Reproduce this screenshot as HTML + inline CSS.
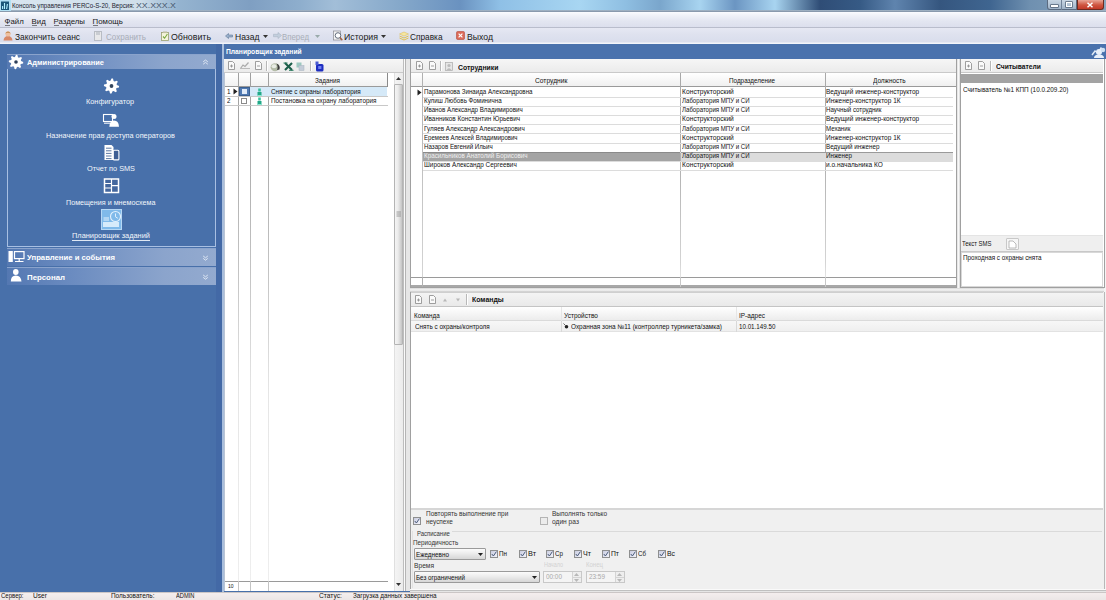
<!DOCTYPE html><html><head><meta charset="utf-8"><style>
*{margin:0;padding:0;box-sizing:border-box}
html,body{width:1106px;height:600px;overflow:hidden;background:#f0f0f0;font-family:"Liberation Sans",sans-serif;color:#222}
.a{position:absolute}
.t{position:absolute;white-space:nowrap;line-height:1}
</style></head><body>
<div class="a" style="left:0px;top:0px;width:1106px;height:11px;background:linear-gradient(90deg,#d9e6f0 0px,#cfdeea 140px,#95b4d0 178px,#7f9fc2 250px,#8eaecd 300px,#a2bed8 335px,#85a8ca 400px,#6a92c0 460px,#8fc0e6 500px,#a8d6f2 580px,#8fbfe2 625px,#7aa6cc 660px,#a8d4f0 700px,#6b95c2 735px,#a8d4f0 775px,#2f4d76 820px,#365a85 860px,#5f84ae 895px,#35567f 940px,#3f6590 990px,#6f90b0 1030px,#8aa6c0 1106px)"></div>
<div class="a" style="left:0px;top:10px;width:1106px;height:2px;background:linear-gradient(#a9bccc,#7f8fa3)"></div>
<svg class="a" style="left:0px;top:0px;" width="11" height="11" viewBox="0 0 11 11"><rect x="0" y="0" width="11" height="11" fill="#b2e0f2"/><rect x="1" y="1.5" width="8" height="8.5" fill="#1c5878"/><path d="M2.6 6 V9 M4.5 3 V9 M7.4 4 L6.6 9" stroke="#b4f2ff" stroke-width="1.1"/></svg>
<div class="t" style="left:11.60px;top:2.20px;font-size:7.21px;color:#1c2430;transform:scaleX(0.8550);transform-origin:0 0;">Консоль управления PERCo-S-20, Версия: </div>
<div class="t" style="left:135.60px;top:2.20px;font-size:7.21px;color:#44546a;transform:scaleX(1.2176);transform-origin:0 0;">XX.XXX.X</div>
<div class="a" style="left:1047px;top:0px;width:30px;height:10px;background:linear-gradient(#c9d6e3,#9fb3c8);border:1px solid #5b6b80;border-top:none;border-radius:0 0 0 3px"></div>
<div class="a" style="left:1061px;top:0px;width:1px;height:10px;background:#6f8197"></div>
<div class="a" style="left:1051px;top:5px;width:7px;height:2px;background:#fff;box-shadow:0 0 0 0.6px #3a4a5e"></div>
<div class="a" style="left:1066px;top:2px;width:6px;height:5px;border:1px solid #fff;box-shadow:0 0 0 0.6px #3a4a5e"></div>
<div class="a" style="left:1077px;top:0px;width:27px;height:10px;background:linear-gradient(#e9a696,#cf5540 55%,#c23a28);border:1px solid #6e2a20;border-top:none;border-radius:0 0 3px 0"></div>
<svg class="a" style="left:1086px;top:2px;" width="8" height="6" viewBox="0 0 8 6"><path d="M1.5 0.8 L6.5 5.2 M6.5 0.8 L1.5 5.2" stroke="#fff" stroke-width="1.5"/></svg>
<div class="a" style="left:0px;top:12px;width:1106px;height:16px;background:linear-gradient(#fbfcff 0px,#f1f3f9 3px,#e3e6f1 9px,#dcdfed 15px)"></div>
<div class="a" style="left:0px;top:27px;width:1106px;height:1px;background:#b9bdcc"></div>
<div class="t" style="left:4.60px;top:17.80px;font-size:7.80px;color:#1a1a1a;">Файл</div>
<div class="t" style="left:31.60px;top:17.80px;font-size:7.80px;color:#1a1a1a;">Вид</div>
<div class="t" style="left:53.60px;top:17.80px;font-size:7.80px;color:#1a1a1a;">Разделы</div>
<div class="t" style="left:92.60px;top:17.80px;font-size:7.80px;color:#1a1a1a;">Помощь</div>
<div class="a" style="left:5px;top:25px;width:5px;height:1px;background:#333;opacity:.6"></div>
<div class="a" style="left:32px;top:25px;width:5px;height:1px;background:#333;opacity:.6"></div>
<div class="a" style="left:54px;top:25px;width:5px;height:1px;background:#333;opacity:.6"></div>
<div class="a" style="left:93px;top:25px;width:5px;height:1px;background:#333;opacity:.6"></div>
<div class="a" style="left:0px;top:28px;width:1106px;height:16px;background:linear-gradient(#e6e8f3 0px,#dfe2ef 6px,#d9ddec 14px,#f2f4fa 15px)"></div>
<svg class="a" style="left:3px;top:30px;" width="10" height="11" viewBox="0 0 10 11"><path d="M0.5 10.5 Q1 6 5 6 Q9 6 9.5 10.5Z" fill="#d88868"/><circle cx="5" cy="3.8" r="2.6" fill="#f0c0a0"/><path d="M2.2 3.6 Q5 -0.8 7.8 3.6 Q5 2 2.2 3.6Z" fill="#c08850"/></svg>
<div class="t" style="left:14.60px;top:33.00px;font-size:8.50px;color:#1a1a1a;transform:scaleX(0.9908);transform-origin:0 0;">Закончить сеанс</div>
<svg class="a" style="left:94px;top:31px;" width="8" height="10" viewBox="0 0 8 10"><rect x="0.5" y="0.5" width="7" height="9" fill="#e8e8ea" stroke="#b8bcc4"/><rect x="2" y="1" width="4" height="3" fill="#c9ccd2"/></svg>
<div class="t" style="left:105.60px;top:33.00px;font-size:8.50px;color:#a8adb8;transform:scaleX(0.9470);transform-origin:0 0;">Сохранить</div>
<svg class="a" style="left:161px;top:31px;" width="9" height="10" viewBox="0 0 9 10"><rect x="0.5" y="1.5" width="7" height="8" fill="#f4f4dc" stroke="#9aa070" stroke-width="0.8"/><path d="M2 5.5 L3.6 7.2 L6.4 3" stroke="#7aa840" stroke-width="1.1" fill="none"/><rect x="2" y="0.5" width="4" height="1.6" fill="#c0c0a0"/></svg>
<div class="t" style="left:170.60px;top:33.00px;font-size:8.50px;color:#1a1a1a;transform:scaleX(1.0393);transform-origin:0 0;">Обновить</div>
<svg class="a" style="left:225px;top:33px;" width="8" height="6" viewBox="0 0 8 6"><path d="M0.5 3 L3.5 0.5 L3.5 2 L7.5 2 L7.5 4 L3.5 4 L3.5 5.5Z" fill="#9ab0cc" stroke="#5f7898" stroke-width="0.6"/></svg>
<div class="t" style="left:234.60px;top:33.00px;font-size:8.50px;color:#1a1a1a;transform:scaleX(1.0059);transform-origin:0 0;">Назад</div>
<svg class="a" style="left:263px;top:35px;" width="5" height="3" viewBox="0 0 5 3"><path d="M0 0 L5 0 L2.5 3Z" fill="#333"/></svg>
<svg class="a" style="left:273px;top:32px;" width="9" height="7" viewBox="0 0 9 7"><path d="M8.5 3.5 L5 0.5 L5 2.3 L0.5 2.3 L0.5 4.7 L5 4.7 L5 6.5Z" fill="#c3cfdd" stroke="#a9b6c6" stroke-width="0.6"/></svg>
<div class="t" style="left:281.60px;top:33.00px;font-size:8.50px;color:#a9aeb8;transform:scaleX(0.9238);transform-origin:0 0;">Вперед</div>
<svg class="a" style="left:315px;top:35px;" width="5" height="3" viewBox="0 0 5 3"><path d="M0 0 L5 0 L2.5 3Z" fill="#9aa"/></svg>
<svg class="a" style="left:333px;top:30px;" width="10" height="11" viewBox="0 0 10 11"><rect x="0.5" y="1" width="7" height="9" fill="#f2f2f2" stroke="#8a8a90" stroke-width="0.7"/><circle cx="5" cy="5.5" r="2.8" fill="#fff" stroke="#556070" stroke-width="0.9"/><path d="M7 7.5 L9.3 10.3" stroke="#a06040" stroke-width="1.4"/></svg>
<div class="t" style="left:343.60px;top:33.00px;font-size:8.50px;color:#1a1a1a;transform:scaleX(1.0315);transform-origin:0 0;">История</div>
<svg class="a" style="left:381px;top:35px;" width="5" height="3" viewBox="0 0 5 3"><path d="M0 0 L5 0 L2.5 3Z" fill="#333"/></svg>
<svg class="a" style="left:399px;top:31px;" width="10" height="10" viewBox="0 0 10 10"><path d="M0.5 3 L5 1 L9.5 3 L5 5Z" fill="#f6e6a0" stroke="#d8b850" stroke-width="0.5"/><path d="M0.5 5 L5 7 L9.5 5 M0.5 7 L5 9 L9.5 7" stroke="#e0c050" stroke-width="1" fill="none"/></svg>
<div class="t" style="left:409.60px;top:33.00px;font-size:8.50px;color:#1a1a1a;transform:scaleX(0.9747);transform-origin:0 0;">Справка</div>
<svg class="a" style="left:456px;top:31px;" width="9" height="9" viewBox="0 0 9 9"><rect x="0.5" y="0.5" width="8" height="8" rx="1.2" fill="#dc6a58" stroke="#b44a3a" stroke-width="0.6"/><path d="M2.6 2.6 L6.4 6.4 M6.4 2.6 L2.6 6.4" stroke="#fff" stroke-width="1.2"/></svg>
<div class="t" style="left:466.60px;top:33.00px;font-size:8.50px;color:#1a1a1a;transform:scaleX(1.0222);transform-origin:0 0;">Выход</div>
<div class="a" style="left:0px;top:44px;width:1106px;height:548px;background:#4870aa"></div>
<div class="a" style="left:0px;top:592px;width:1106px;height:8px;background:linear-gradient(#f4eeee,#ebe6e6);border-top:1px solid #cbc6c6"></div>
<div class="t" style="left:1.20px;top:593.15px;font-size:6.68px;color:#111;transform:scaleX(0.8997);transform-origin:0 0;">Сервер:</div>
<div class="t" style="left:33.00px;top:593.15px;font-size:6.68px;color:#111;transform:scaleX(0.9929);transform-origin:0 0;">User</div>
<div class="t" style="left:110.90px;top:593.15px;font-size:6.68px;color:#111;transform:scaleX(0.9626);transform-origin:0 0;">Пользователь:</div>
<div class="t" style="left:175.60px;top:593.15px;font-size:6.68px;color:#111;transform:scaleX(0.8597);transform-origin:0 0;">ADMIN</div>
<div class="t" style="left:318.60px;top:593.15px;font-size:6.68px;color:#111;transform:scaleX(0.9928);transform-origin:0 0;">Статус:</div>
<div class="t" style="left:353.30px;top:593.15px;font-size:6.68px;color:#111;transform:scaleX(0.9489);transform-origin:0 0;">Загрузка данных завершена</div>
<div class="a" style="left:7px;top:54px;width:209px;height:15px;background:linear-gradient(90deg,#5478b2 0%,#6a8bc0 30%,#8ba4cc 75%,#93aacf 100%);border-top:1px solid #8aa3cc"></div>
<svg class="a" style="left:8px;top:54px" width="16" height="16" viewBox="0 0 16 16"><polygon points="8.00,0.80 9.40,0.94 9.98,3.21 10.88,3.69 13.09,2.91 13.99,4.00 12.79,6.02 13.08,6.99 15.20,8.00 15.06,9.40 12.79,9.98 12.31,10.88 13.09,13.09 12.00,13.99 9.98,12.79 9.01,13.08 8.00,15.20 6.60,15.06 6.02,12.79 5.12,12.31 2.91,13.09 2.01,12.00 3.21,9.98 2.92,9.01 0.80,8.00 0.94,6.60 3.21,6.02 3.69,5.12 2.91,2.91 4.00,2.01 6.02,3.21 6.99,2.92" fill="#fff"/><circle cx="8" cy="8" r="4.46" fill="#fff"/><circle cx="8" cy="8" r="1.80" fill="#2d3f5a"/></svg>
<div class="t" style="left:26.90px;top:58.57px;font-size:7.60px;color:#ffffff;font-weight:bold;transform:scaleX(0.9783);transform-origin:0 0;">Администрирование</div>
<svg class="a" style="left:202px;top:59px;" width="7" height="6" viewBox="0 0 7 6"><path d="M1.2 2.8 L3.5 1 L5.8 2.8 M1.2 5.2 L3.5 3.4 L5.8 5.2" stroke="#e6edf7" stroke-width="0.9" fill="none"/></svg>
<div class="a" style="left:7px;top:69px;width:209px;height:178px;border:1px solid #a8bfe2;border-top:none"></div>
<svg class="a" style="left:103px;top:78px;" width="17" height="16" viewBox="0 0 17 16"><polygon points="8.50,0.40 9.98,0.55 10.59,2.94 11.54,3.45 13.87,2.63 14.82,3.78 13.56,5.91 13.87,6.93 16.10,8.00 15.95,9.48 13.56,10.09 13.05,11.04 13.87,13.37 12.72,14.32 10.59,13.06 9.57,13.37 8.50,15.60 7.02,15.45 6.41,13.06 5.46,12.55 3.13,13.37 2.18,12.22 3.44,10.09 3.13,9.07 0.90,8.00 1.05,6.52 3.44,5.91 3.95,4.96 3.13,2.63 4.28,1.68 6.41,2.94 7.43,2.63" fill="#fff"/><circle cx="8.5" cy="8" r="4.71" fill="#fff"/><circle cx="8.5" cy="8" r="1.90" fill="#33465f"/></svg>
<div class="t" style="left:86.40px;top:98.45px;font-size:7.74px;color:#f2f6fb;transform:scaleX(0.9473);transform-origin:0 0;">Конфигуратор</div>
<svg class="a" style="left:102px;top:113px;" width="18" height="14" viewBox="0 0 18 14"><rect x="1.5" y="1.5" width="9" height="7" fill="none" stroke="#fff" stroke-width="1.1"/><path d="M2 10.2 H9" stroke="#fff" stroke-width="1"/><circle cx="12" cy="3.6" r="2.5" fill="#fff"/><path d="M7.3 13.8 Q7.8 7.6 12 7.6 Q16.6 7.6 17 13.8Z" fill="#fff"/></svg>
<div class="t" style="left:46.40px;top:131.95px;font-size:7.74px;color:#f2f6fb;transform:scaleX(0.9433);transform-origin:0 0;">Назначение прав доступа операторов</div>
<svg class="a" style="left:103px;top:144px;" width="17" height="17" viewBox="0 0 17 17"><path d="M1.5 1 H8.5 L10.5 3 V16 H1.5Z" fill="#fff"/><path d="M3 4.2 H8.5 M3 6.8 H8.5 M3 9.4 H8.5 M3 12 H8.5 M3 14.6 H8.5" stroke="#4a6a9a" stroke-width="0.9"/><rect x="10.3" y="6.3" width="5.6" height="9.6" rx="1" fill="#3f5f94" stroke="#fff" stroke-width="1.1"/></svg>
<div class="t" style="left:86.90px;top:165.35px;font-size:7.74px;color:#f2f6fb;transform:scaleX(0.9459);transform-origin:0 0;">Отчет по SMS</div>
<svg class="a" style="left:103px;top:178px;" width="17" height="16" viewBox="0 0 17 16"><rect x="1.5" y="1" width="14" height="13.5" fill="#44679e" stroke="#fff" stroke-width="1.5"/><path d="M8.5 1 V14.5 M1.5 5.5 H8.5 M1.5 10 H8.5 M8.5 7.7 H15.5" stroke="#fff" stroke-width="1.2"/></svg>
<div class="t" style="left:65.90px;top:198.55px;font-size:7.74px;color:#f2f6fb;transform:scaleX(0.9267);transform-origin:0 0;">Помещения и мнемосхема</div>
<div class="a" style="left:101px;top:209px;width:21px;height:21px;background:#80baea;border:1px solid #b6d8f5"></div>
<svg class="a" style="left:102px;top:210px;" width="19" height="19" viewBox="0 0 19 19"><rect x="1" y="12" width="16" height="5" fill="#d6ebfb"/><path d="M1.5 8 H7 M1.5 10 H7" stroke="#e6f3fd" stroke-width="1"/><circle cx="13.5" cy="6.5" r="5" fill="#80baea" stroke="#e2f1fd" stroke-width="1.1"/><path d="M13.5 3.5 V6.8 L15.8 8.3" stroke="#e2f1fd" stroke-width="1" fill="none"/></svg>
<div class="t" style="left:72.00px;top:232.35px;font-size:7.74px;color:#f2f6fb;transform:scaleX(0.9570);transform-origin:0 0;">Планировщик заданий</div>
<div class="a" style="left:72px;top:240px;width:78px;height:1px;background:#dfe8f4"></div>
<div class="a" style="left:7px;top:248px;width:209px;height:18px;background:linear-gradient(90deg,#5478b2 0%,#6a8bc0 30%,#8ba4cc 75%,#93aacf 100%);border-top:1px solid #8aa3cc"></div>
<svg class="a" style="left:8px;top:251px" width="17" height="12" viewBox="0 0 17 12"><rect x="0.5" y="0" width="4.3" height="11" fill="#fff"/><rect x="6.5" y="0.6" width="9.5" height="7" fill="none" stroke="#fff" stroke-width="1.2"/><path d="M11.2 7.6 V10 M7 10.5 H15.5" stroke="#fff" stroke-width="1.2"/></svg>
<div class="t" style="left:26.90px;top:254.27px;font-size:7.60px;color:#ffffff;font-weight:bold;transform:scaleX(1.0151);transform-origin:0 0;">Управление и события</div>
<svg class="a" style="left:202px;top:255px;" width="7" height="6" viewBox="0 0 7 6"><path d="M1.2 1 L3.5 2.8 L5.8 1 M1.2 3.4 L3.5 5.2 L5.8 3.4" stroke="#e6edf7" stroke-width="0.9" fill="none"/></svg>
<div class="a" style="left:7px;top:267px;width:209px;height:18px;background:linear-gradient(90deg,#5478b2 0%,#6a8bc0 30%,#8ba4cc 75%,#93aacf 100%);border-top:1px solid #8aa3cc"></div>
<svg class="a" style="left:10px;top:269px" width="13" height="13" viewBox="0 0 13 13"><ellipse cx="5.8" cy="3" rx="2.8" ry="3" fill="#fff"/><path d="M0.8 12.5 Q0.8 6.5 5.8 6.5 Q11 6.5 11.5 12.5Z" fill="#fff"/></svg>
<div class="t" style="left:26.90px;top:273.57px;font-size:7.60px;color:#ffffff;font-weight:bold;transform:scaleX(1.0313);transform-origin:0 0;">Персонал</div>
<svg class="a" style="left:202px;top:274px;" width="7" height="6" viewBox="0 0 7 6"><path d="M1.2 1 L3.5 2.8 L5.8 1 M1.2 3.4 L3.5 5.2 L5.8 3.4" stroke="#e6edf7" stroke-width="0.9" fill="none"/></svg>
<div class="a" style="left:216px;top:44px;width:6px;height:548px;background:#4369a6"></div>
<div class="a" style="left:222px;top:44px;width:2px;height:548px;background:#a9bedc"></div>
<div class="a" style="left:224px;top:44px;width:882px;height:15px;background:#4a72ad"></div>
<div class="t" style="left:226.40px;top:48.40px;font-size:7.21px;color:#ffffff;font-weight:bold;transform:scaleX(0.9321);transform-origin:0 0;">Планировщик заданий</div>
<svg class="a" style="left:1090px;top:46px;" width="16" height="12" viewBox="0 0 16 12"><path d="M2 9 L5 5 L8 7 L11 2 L14 4" stroke="#dfeaf6" stroke-width="1.5" fill="none"/><circle cx="9" cy="6" r="3" fill="#e8f0fa"/><path d="M4 12 Q4 8.5 9 8.5 Q14 8.5 14 12Z" fill="#e8f0fa"/><circle cx="13" cy="4" r="2.2" fill="#cfe0f2"/></svg>
<div class="a" style="left:224px;top:59px;width:179px;height:532px;background:#ffffff;border-left:1px solid #b9c4d4"></div>
<div class="a" style="left:224px;top:59px;width:179px;height:14px;background:linear-gradient(#f6f6f6,#ebebeb);border-bottom:1px solid #c9c9c9"></div>
<svg class="a" style="left:228px;top:61px;" width="7" height="9" viewBox="0 0 7 9"><path d="M0.5 0.5 H4.5 L6.5 2.5 V8.5 H0.5Z" fill="#fafafa" stroke="#888" stroke-width="0.8"/><path d="M2 5 H5 M3.5 3.5 V6.5" stroke="#888" stroke-width="0.8"/></svg>
<svg class="a" style="left:240px;top:62px;" width="10" height="7" viewBox="0 0 10 7"><path d="M0.5 6.5 L3 3 L5 4.5 L8.5 0.5" stroke="#aaa" stroke-width="1.2" fill="none"/><path d="M0 6.5 H10" stroke="#bbb"/></svg>
<svg class="a" style="left:255px;top:61px;" width="7" height="9" viewBox="0 0 7 9"><path d="M0.5 0.5 H4.5 L6.5 2.5 V8.5 H0.5Z" fill="#fafafa" stroke="#888" stroke-width="0.8"/><path d="M2 5 H5" stroke="#888" stroke-width="0.8"/></svg>
<div class="a" style="left:266px;top:61px;width:1px;height:10px;background:#b8b8b8;box-shadow:1px 0 0 #fff"></div>
<svg class="a" style="left:270px;top:61px;" width="11" height="11" viewBox="0 0 11 11"><ellipse cx="5" cy="6.2" rx="4.4" ry="4" fill="#b4bca8"/><ellipse cx="4" cy="5.2" rx="2.4" ry="2" fill="#e8ece4"/><path d="M6.5 2.5 Q10.5 4 9.5 8.5 L7 9 Q8.5 6 6.5 2.5Z" fill="#3a3a3a"/></svg>
<svg class="a" style="left:283px;top:62px;" width="11" height="9" viewBox="0 0 11 9"><path d="M2 1 L9 8 M9 1 L2 8" stroke="#1c5e4a" stroke-width="2.1"/><path d="M0.5 1 H4.5 M6 8.3 H10.5" stroke="#2a7a5e" stroke-width="1"/></svg>
<svg class="a" style="left:296px;top:62px;" width="9" height="9" viewBox="0 0 9 9"><rect x="0.5" y="0.5" width="5" height="5" fill="#9cc8c0"/><rect x="3" y="3.5" width="5" height="5" fill="#c4ccd8" stroke="#a8b4c0" stroke-width="0.5"/></svg>
<div class="a" style="left:310px;top:61px;width:1px;height:10px;background:#b8b8b8;box-shadow:1px 0 0 #fff"></div>
<svg class="a" style="left:315px;top:61px;" width="9" height="11" viewBox="0 0 9 11"><rect x="1" y="3" width="7.5" height="7.5" rx="1.5" fill="#1e2ec0"/><rect x="0.5" y="0.5" width="3" height="3.5" fill="#4a5ad0"/><rect x="3.2" y="5" width="3.2" height="3" fill="#7080f0"/></svg>
<div class="a" style="left:225px;top:73px;width:163px;height:14px;background:linear-gradient(#ffffff,#f1f1f1);border-bottom:1px solid #9a9a9a"></div>
<div class="a" style="left:238px;top:73px;width:1px;height:508px;background:linear-gradient(#a0a0a0 0px,#a8a8a8 60px,#c4c4c4 200px,#e6e6e6 320px,#eeeeee 508px)"></div>
<div class="a" style="left:250px;top:73px;width:1px;height:508px;background:linear-gradient(#a0a0a0 0px,#a8a8a8 60px,#c4c4c4 200px,#e6e6e6 320px,#eeeeee 508px)"></div>
<div class="a" style="left:268px;top:73px;width:1px;height:508px;background:linear-gradient(#a0a0a0 0px,#a8a8a8 60px,#c4c4c4 200px,#e6e6e6 320px,#eeeeee 508px)"></div>
<div class="a" style="left:387px;top:73px;width:1px;height:14px;background:#8a8a8a"></div>
<div class="t" style="left:314.60px;top:77.65px;font-size:6.68px;color:#111;transform:scaleX(0.9472);transform-origin:0 0;">Задания</div>
<div class="a" style="left:250px;top:87px;width:137px;height:9px;background:#d5e9f8"></div>
<div class="a" style="left:239px;top:87px;width:11px;height:9px;background:#4f79b2;border:1px solid #3a5f90"></div>
<div class="a" style="left:242px;top:89px;width:5px;height:5px;background:#dfeaf8"></div>
<div class="a" style="left:225px;top:96px;width:163px;height:1px;background:#c8c8c8"></div>
<div class="a" style="left:225px;top:105px;width:163px;height:1px;background:#c8c8c8"></div>
<div class="t" style="left:226.60px;top:88.65px;font-size:6.68px;color:#111;transform:scaleX(0.9434);transform-origin:0 0;">1</div>
<svg class="a" style="left:233px;top:88px;" width="5" height="7" viewBox="0 0 5 7"><path d="M0.5 0.5 L4.5 3.5 L0.5 6.5Z" fill="#222"/></svg>
<div class="t" style="left:226.60px;top:97.65px;font-size:6.68px;color:#111;transform:scaleX(0.9434);transform-origin:0 0;">2</div>
<div class="a" style="left:241px;top:98px;width:6px;height:6px;background:#fff;border:1px solid #8a8a8a"></div>
<svg class="a" style="left:257px;top:88px;" width="5" height="8" viewBox="0 0 5 8"><rect x="1.2" y="0.5" width="2.6" height="3" fill="#3cc0a0"/><rect x="0.5" y="4" width="4" height="3" fill="#22a888"/><rect x="0" y="7" width="5" height="1" fill="#8ae8d0"/></svg>
<svg class="a" style="left:257px;top:97px;" width="5" height="8" viewBox="0 0 5 8"><rect x="1.2" y="0.5" width="2.6" height="3" fill="#3cc0a0"/><rect x="0.5" y="4" width="4" height="3" fill="#22a888"/><rect x="0" y="7" width="5" height="1" fill="#8ae8d0"/></svg>
<div class="t" style="left:270.50px;top:88.65px;font-size:6.68px;color:#111;transform:scaleX(0.9491);transform-origin:0 0;">Снятие с охраны лаборатория</div>
<div class="t" style="left:270.50px;top:97.65px;font-size:6.68px;color:#111;transform:scaleX(0.9524);transform-origin:0 0;">Постановка на охрану лаборатория</div>
<div class="a" style="left:225px;top:581px;width:163px;height:10px;background:#fff;border-top:1px solid #9a9a9a"></div>
<div class="t" style="left:227.60px;top:584.01px;font-size:5.30px;color:#111;transform:scaleX(0.9434);transform-origin:0 0;">10</div>
<div class="a" style="left:238px;top:581px;width:1px;height:10px;background:#c4c4c4"></div>
<div class="a" style="left:250px;top:581px;width:1px;height:10px;background:#c4c4c4"></div>
<div class="a" style="left:268px;top:581px;width:1px;height:10px;background:#c4c4c4"></div>
<div class="a" style="left:394px;top:73px;width:10px;height:518px;background:linear-gradient(90deg,#f4f4f4,#eaeaea);border-left:1px solid #e0e0e0"></div>
<div class="a" style="left:394px;top:84px;width:9px;height:261px;background:linear-gradient(90deg,#f4f4f4 0%,#ececec 40%,#cfcfcf 85%,#c4c4c4 100%);border:1px solid #b4b4b4;border-radius:1px"></div>
<svg class="a" style="left:396px;top:211px;" width="6" height="7" viewBox="0 0 6 7"><path d="M0.5 1 H5 M0.5 3 H5 M0.5 5 H5" stroke="#8a8a8a" stroke-width="0.8"/></svg>
<svg class="a" style="left:396px;top:77px;" width="5" height="3" viewBox="0 0 5 3"><path d="M0 3 L2.5 0 L5 3Z" fill="#333"/></svg>
<svg class="a" style="left:396px;top:583px;" width="5" height="3" viewBox="0 0 5 3"><path d="M0 0 L2.5 3 L5 0Z" fill="#333"/></svg>
<div class="a" style="left:403px;top:59px;width:8px;height:532px;background:linear-gradient(90deg,#bdbdbd 0,#bdbdbd 1px,#fafafa 1px,#fafafa 2px,#b4b4b4 2px,#b4b4b4 3px,#e6e6e6 3px,#e6e6e6 7px,#c4c4c4 7px)"></div>
<div class="a" style="left:1100px;top:59px;width:6px;height:532px;background:#f4f4f4"></div>
<div class="a" style="left:410px;top:59px;width:547px;height:229px;background:#fff;border:1px solid #a0a0a0;border-top:none"></div>
<div class="a" style="left:411px;top:59px;width:545px;height:14px;background:linear-gradient(#f6f6f6,#ebebeb);border-bottom:1px solid #c9c9c9"></div>
<svg class="a" style="left:416px;top:61px;" width="7" height="9" viewBox="0 0 7 9"><path d="M0.5 0.5 H4.5 L6.5 2.5 V8.5 H0.5Z" fill="#fafafa" stroke="#888" stroke-width="0.8"/><path d="M2 5 H5 M3.5 3.5 V6.5" stroke="#888" stroke-width="0.8"/></svg>
<svg class="a" style="left:429px;top:61px;" width="7" height="9" viewBox="0 0 7 9"><path d="M0.5 0.5 H4.5 L6.5 2.5 V8.5 H0.5Z" fill="#fafafa" stroke="#888" stroke-width="0.8"/><path d="M2 5 H5" stroke="#888" stroke-width="0.8"/></svg>
<div class="a" style="left:440px;top:61px;width:1px;height:10px;background:#b8b8b8;box-shadow:1px 0 0 #fff"></div>
<svg class="a" style="left:445px;top:61px;" width="9" height="10" viewBox="0 0 9 10"><rect x="0.5" y="1.5" width="7" height="8" fill="#e6e6e6" stroke="#aaa" stroke-width="0.7"/><circle cx="4" cy="4.5" r="1.6" fill="#bbb"/><path d="M1.5 9 Q4 5.5 6.5 9" fill="#bbb"/></svg>
<div class="t" style="left:458.10px;top:63.60px;font-size:7.21px;color:#111;font-weight:bold;transform:scaleX(0.9531);transform-origin:0 0;">Сотрудники</div>
<div class="a" style="left:411px;top:73px;width:545px;height:14px;background:linear-gradient(#ffffff,#f0f0f0);border-bottom:1px solid #9a9a9a"></div>
<div class="a" style="left:422px;top:73px;width:1px;height:205px;background:linear-gradient(#b0b0b0,#d4d4d4)"></div>
<div class="a" style="left:680px;top:73px;width:1px;height:205px;background:linear-gradient(#a8a8a8 0px,#b4b4b4 100px,#d4d4d4 190px,#e4e4e4 204px)"></div>
<div class="a" style="left:825px;top:73px;width:1px;height:205px;background:linear-gradient(#a8a8a8 0px,#b4b4b4 100px,#d4d4d4 190px,#e4e4e4 204px)"></div>
<div class="t" style="left:534.60px;top:77.76px;font-size:6.78px;color:#111;transform:scaleX(0.9831);transform-origin:0 0;">Сотрудник</div>
<div class="t" style="left:728.60px;top:77.76px;font-size:6.78px;color:#111;transform:scaleX(0.9345);transform-origin:0 0;">Подразделение</div>
<div class="t" style="left:872.60px;top:77.76px;font-size:6.78px;color:#111;transform:scaleX(0.9492);transform-origin:0 0;">Должность</div>
<div class="a" style="left:423px;top:97px;width:530px;height:1px;background:#dcdcdc"></div>
<div class="t" style="left:423.60px;top:89.05px;font-size:6.68px;color:#111;transform:scaleX(0.9272);transform-origin:0 0;">Парамонова Зинаида Александровна</div>
<div class="t" style="left:682.10px;top:89.05px;font-size:6.68px;color:#111;">Конструкторский</div>
<div class="t" style="left:825.60px;top:89.05px;font-size:6.68px;color:#111;transform:scaleX(0.9699);transform-origin:0 0;">Ведущий инженер-конструктор</div>
<div class="a" style="left:423px;top:106px;width:530px;height:1px;background:#dcdcdc"></div>
<div class="t" style="left:423.60px;top:98.18px;font-size:6.68px;color:#111;transform:scaleX(0.9357);transform-origin:0 0;">Кулиш Любовь Фоминична</div>
<div class="t" style="left:682.10px;top:98.18px;font-size:6.68px;color:#111;transform:scaleX(0.9124);transform-origin:0 0;">Лаборатория МПУ и СИ</div>
<div class="t" style="left:825.60px;top:98.18px;font-size:6.68px;color:#111;transform:scaleX(0.9732);transform-origin:0 0;">Инженер-конструктор 1К</div>
<div class="a" style="left:423px;top:115px;width:530px;height:1px;background:#dcdcdc"></div>
<div class="t" style="left:423.60px;top:107.31px;font-size:6.68px;color:#111;transform:scaleX(0.9289);transform-origin:0 0;">Иванов Александр Владимирович</div>
<div class="t" style="left:682.10px;top:107.31px;font-size:6.68px;color:#111;transform:scaleX(0.9124);transform-origin:0 0;">Лаборатория МПУ и СИ</div>
<div class="t" style="left:825.60px;top:107.31px;font-size:6.68px;color:#111;transform:scaleX(0.9191);transform-origin:0 0;">Научный сотрудник</div>
<div class="a" style="left:423px;top:124px;width:530px;height:1px;background:#dcdcdc"></div>
<div class="t" style="left:423.60px;top:116.44px;font-size:6.68px;color:#111;transform:scaleX(0.9518);transform-origin:0 0;">Иванников Константин Юрьевич</div>
<div class="t" style="left:682.10px;top:116.44px;font-size:6.68px;color:#111;">Конструкторский</div>
<div class="t" style="left:825.60px;top:116.44px;font-size:6.68px;color:#111;transform:scaleX(0.9699);transform-origin:0 0;">Ведущий инженер-конструктор</div>
<div class="a" style="left:423px;top:133px;width:530px;height:1px;background:#dcdcdc"></div>
<div class="t" style="left:423.60px;top:125.57px;font-size:6.68px;color:#111;transform:scaleX(0.9496);transform-origin:0 0;">Гуляев Александр Александрович</div>
<div class="t" style="left:682.10px;top:125.57px;font-size:6.68px;color:#111;transform:scaleX(0.9124);transform-origin:0 0;">Лаборатория МПУ и СИ</div>
<div class="t" style="left:825.60px;top:125.57px;font-size:6.68px;color:#111;transform:scaleX(0.9199);transform-origin:0 0;">Механик</div>
<div class="a" style="left:423px;top:143px;width:530px;height:1px;background:#dcdcdc"></div>
<div class="t" style="left:423.60px;top:134.70px;font-size:6.68px;color:#111;transform:scaleX(0.9069);transform-origin:0 0;">Еремеев Алексей Владимирович</div>
<div class="t" style="left:682.10px;top:134.70px;font-size:6.68px;color:#111;">Конструкторский</div>
<div class="t" style="left:825.60px;top:134.70px;font-size:6.68px;color:#111;transform:scaleX(0.9732);transform-origin:0 0;">Инженер-конструктор 1К</div>
<div class="a" style="left:423px;top:152px;width:530px;height:1px;background:#dcdcdc"></div>
<div class="t" style="left:423.60px;top:143.83px;font-size:6.68px;color:#111;transform:scaleX(0.9239);transform-origin:0 0;">Назаров Евгений Ильич</div>
<div class="t" style="left:682.10px;top:143.83px;font-size:6.68px;color:#111;transform:scaleX(0.9124);transform-origin:0 0;">Лаборатория МПУ и СИ</div>
<div class="t" style="left:825.60px;top:143.83px;font-size:6.68px;color:#111;transform:scaleX(0.9439);transform-origin:0 0;">Ведущий инженер</div>
<div class="a" style="left:423px;top:152px;width:257px;height:9px;background:#a4a4a4;border-top:1px solid #8a8a8a"></div>
<div class="a" style="left:681px;top:152px;width:272px;height:9px;background:#dcdcdc;border-top:1px solid #9a9a9a"></div>
<div class="a" style="left:423px;top:161px;width:530px;height:1px;background:#dcdcdc"></div>
<div class="t" style="left:423.60px;top:152.96px;font-size:6.68px;color:#f0f0f0;transform:scaleX(0.9401);transform-origin:0 0;">Красильников Анатолий Борисович</div>
<div class="t" style="left:682.10px;top:152.96px;font-size:6.68px;color:#111;transform:scaleX(0.9124);transform-origin:0 0;">Лаборатория МПУ и СИ</div>
<div class="t" style="left:825.60px;top:152.96px;font-size:6.68px;color:#111;transform:scaleX(0.9357);transform-origin:0 0;">Инженер</div>
<div class="a" style="left:423px;top:170px;width:530px;height:1px;background:#dcdcdc"></div>
<div class="t" style="left:423.60px;top:162.09px;font-size:6.68px;color:#111;transform:scaleX(0.9529);transform-origin:0 0;">Широков Александр Сергеевич</div>
<div class="t" style="left:682.10px;top:162.09px;font-size:6.68px;color:#111;">Конструкторский</div>
<div class="t" style="left:825.60px;top:162.09px;font-size:6.68px;color:#111;transform:scaleX(0.9786);transform-origin:0 0;">и.о.начальника КО</div>
<svg class="a" style="left:417px;top:89px;" width="5" height="7" viewBox="0 0 5 7"><path d="M0.5 0.5 L4.5 3.5 L0.5 6.5Z" fill="#222"/></svg>
<div class="a" style="left:411px;top:87px;width:11px;height:9px;background:linear-gradient(90deg,#f4f4f4,#e0e0e0);z-index:-1"></div>
<div class="a" style="left:411px;top:277px;width:545px;height:10px;background:#fff;border-top:1px solid #9a9a9a;border-bottom:2px solid #a8a8a8"></div>
<div class="a" style="left:422px;top:277px;width:1px;height:10px;background:#b0b0b0"></div>
<div class="a" style="left:680px;top:277px;width:1px;height:10px;background:#c8c8c8"></div>
<div class="a" style="left:825px;top:277px;width:1px;height:10px;background:#c8c8c8"></div>
<div class="a" style="left:957px;top:59px;width:3px;height:229px;background:linear-gradient(90deg,#e0e0e0,#f8f8f8,#d8d8d8)"></div>
<div class="a" style="left:960px;top:59px;width:145px;height:229px;background:#fff;border:1px solid #a0a0a0;border-top:none"></div>
<div class="a" style="left:961px;top:59px;width:142px;height:14px;background:linear-gradient(#f6f6f6,#ebebeb);border-bottom:1px solid #c9c9c9"></div>
<svg class="a" style="left:965px;top:61px;" width="7" height="9" viewBox="0 0 7 9"><path d="M0.5 0.5 H4.5 L6.5 2.5 V8.5 H0.5Z" fill="#fafafa" stroke="#888" stroke-width="0.8"/><path d="M2 5 H5 M3.5 3.5 V6.5" stroke="#888" stroke-width="0.8"/></svg>
<svg class="a" style="left:978px;top:61px;" width="7" height="9" viewBox="0 0 7 9"><path d="M0.5 0.5 H4.5 L6.5 2.5 V8.5 H0.5Z" fill="#fafafa" stroke="#888" stroke-width="0.8"/><path d="M2 5 H5" stroke="#888" stroke-width="0.8"/></svg>
<div class="a" style="left:990px;top:61px;width:1px;height:10px;background:#b8b8b8;box-shadow:1px 0 0 #fff"></div>
<div class="t" style="left:995.60px;top:62.90px;font-size:7.21px;color:#111;font-weight:bold;transform:scaleX(0.9316);transform-origin:0 0;">Считыватели</div>
<div class="a" style="left:961px;top:74px;width:142px;height:9px;background:#a3a3a3"></div>
<div class="t" style="left:963.10px;top:86.55px;font-size:6.68px;color:#111;transform:scaleX(0.9559);transform-origin:0 0;">Считыватель №1 КПП (10.0.209.20)</div>
<div class="a" style="left:961px;top:235px;width:142px;height:17px;background:#efefef;border-top:1px solid #e4e4e4;border-bottom:1px solid #c8c8c8"></div>
<div class="t" style="left:962.10px;top:241.05px;font-size:6.68px;color:#111;transform:scaleX(0.8902);transform-origin:0 0;">Текст SMS</div>
<div class="a" style="left:1006px;top:238px;width:13px;height:12px;background:#f6f6f6;border:1px solid #c8c8c8;border-radius:1px"></div>
<svg class="a" style="left:1008px;top:240px;" width="9" height="9" viewBox="0 0 9 9"><path d="M1 1 H5 L8 4 V8 H1Z" fill="#fff" stroke="#aaa" stroke-width="0.8"/></svg>
<div class="a" style="left:961px;top:252px;width:142px;height:35px;background:#fff;border:1px solid #d8d8d8"></div>
<div class="t" style="left:962.60px;top:254.65px;font-size:6.68px;color:#111;transform:scaleX(0.9477);transform-origin:0 0;">Проходная с охраны снята</div>
<div class="a" style="left:410px;top:288px;width:694px;height:4px;background:linear-gradient(#d8d8d8,#f6f6f6,#c8c8c8)"></div>
<div class="a" style="left:410px;top:292px;width:695px;height:299px;background:#f0f0f0;border-left:1px solid #a0a0a0;border-right:1px solid #b8b8b8"></div>
<div class="a" style="left:411px;top:292px;width:692px;height:15px;background:linear-gradient(#f4f4f4,#e9e9e9);border-top:1px solid #cfcfcf;border-bottom:1px solid #c4c4c4"></div>
<svg class="a" style="left:415px;top:295px;" width="7" height="9" viewBox="0 0 7 9"><path d="M0.5 0.5 H4.5 L6.5 2.5 V8.5 H0.5Z" fill="#fafafa" stroke="#888" stroke-width="0.8"/><path d="M2 5 H5 M3.5 3.5 V6.5" stroke="#888" stroke-width="0.8"/></svg>
<svg class="a" style="left:429px;top:295px;" width="7" height="9" viewBox="0 0 7 9"><path d="M0.5 0.5 H4.5 L6.5 2.5 V8.5 H0.5Z" fill="#fafafa" stroke="#888" stroke-width="0.8"/><path d="M2 5 H5" stroke="#888" stroke-width="0.8"/></svg>
<svg class="a" style="left:443px;top:298px;" width="4" height="4" viewBox="0 0 4 4"><path d="M0 3.5 L2 0.5 L4 3.5Z" fill="#b8b8b8"/></svg>
<svg class="a" style="left:456px;top:298px;" width="4" height="4" viewBox="0 0 4 4"><path d="M0 0.5 L2 3.5 L4 0.5Z" fill="#b8b8b8"/></svg>
<div class="a" style="left:466px;top:294px;width:1px;height:11px;background:#b8b8b8;box-shadow:1px 0 0 #fff"></div>
<div class="t" style="left:472.30px;top:296.18px;font-size:7.00px;color:#111;font-weight:bold;transform:scaleX(0.9886);transform-origin:0 0;">Команды</div>
<div class="a" style="left:411px;top:307px;width:692px;height:203px;background:#fff;border-bottom:2px solid #d6d6d6"></div>
<div class="a" style="left:411px;top:307px;width:692px;height:14px;background:linear-gradient(#ffffff,#ececec);border-bottom:1px solid #dadada"></div>
<div class="t" style="left:414.40px;top:312.86px;font-size:6.78px;color:#111;transform:scaleX(0.9298);transform-origin:0 0;">Команда</div>
<div class="t" style="left:564.30px;top:312.86px;font-size:6.78px;color:#111;transform:scaleX(0.9580);transform-origin:0 0;">Устройство</div>
<div class="t" style="left:739.40px;top:312.86px;font-size:6.78px;color:#111;transform:scaleX(0.9510);transform-origin:0 0;">IP-адрес</div>
<div class="a" style="left:411px;top:321px;width:692px;height:11px;background:linear-gradient(#f7f7f7,#efefef);border-bottom:1px solid #e2e2e2"></div>
<div class="a" style="left:561px;top:321px;width:1px;height:11px;background:#d8d8d8"></div>
<div class="a" style="left:736px;top:321px;width:1px;height:11px;background:#d8d8d8"></div>
<div class="a" style="left:561px;top:307px;width:1px;height:14px;background:#e6e6e6"></div>
<div class="a" style="left:736px;top:307px;width:1px;height:14px;background:#e6e6e6"></div>
<div class="t" style="left:414.60px;top:323.85px;font-size:6.68px;color:#111;transform:scaleX(0.9490);transform-origin:0 0;">Снять с охраны/контроля</div>
<svg class="a" style="left:563px;top:323px;" width="6" height="6" viewBox="0 0 6 6"><circle cx="3.5" cy="3.8" r="1.8" fill="#222"/><path d="M0.5 0.5 L2.5 2.5" stroke="#444" stroke-width="0.8"/></svg>
<div class="t" style="left:570.60px;top:323.85px;font-size:6.68px;color:#111;transform:scaleX(0.9597);transform-origin:0 0;">Охранная зона №11 (контроллер турникета/замка)</div>
<div class="t" style="left:739.40px;top:323.85px;font-size:6.68px;color:#111;transform:scaleX(0.9335);transform-origin:0 0;">10.01.149.50</div>
<div class="a" style="left:413px;top:517px;width:8px;height:8px;background:linear-gradient(135deg,#c8cce0,#f4f4fa);border:1px solid #8e8f8f"></div>
<svg class="a" style="left:414px;top:518px;" width="6" height="6" viewBox="0 0 6 6"><path d="M0.8 3 L2.4 5 L5.4 0.6" stroke="#4a5a7a" stroke-width="1" fill="none"/></svg>
<div class="t" style="left:425.60px;top:511.16px;font-size:6.78px;color:#333;transform:scaleX(0.9539);transform-origin:0 0;">Повторять выполнение при</div>
<div class="t" style="left:425.60px;top:518.56px;font-size:6.78px;color:#333;transform:scaleX(0.9461);transform-origin:0 0;">неуспехе</div>
<div class="a" style="left:540px;top:517px;width:8px;height:8px;background:#ececec;border:1px solid #b4b4b4"></div>
<div class="t" style="left:552.20px;top:511.16px;font-size:6.78px;color:#333;transform:scaleX(0.9606);transform-origin:0 0;">Выполнять только</div>
<div class="t" style="left:552.20px;top:518.56px;font-size:6.78px;color:#333;transform:scaleX(0.9788);transform-origin:0 0;">один раз</div>
<div class="a" style="left:452px;top:531px;width:650px;height:1px;background:#dadada"></div>
<div class="a" style="left:412px;top:531px;width:1px;height:57px;background:#e2e2e2"></div>
<div class="t" style="left:416.60px;top:530.75px;font-size:6.68px;color:#333;transform:scaleX(0.8909);transform-origin:0 0;">Расписание</div>
<div class="t" style="left:413.00px;top:539.76px;font-size:6.78px;color:#333;transform:scaleX(0.9307);transform-origin:0 0;">Периодичность</div>
<div class="a" style="left:414px;top:548px;width:72px;height:12px;background:linear-gradient(#fbfbfb,#ececec 45%,#d6d6d6);border:1px solid #9a9a9a;border-radius:1px"></div>
<div class="t" style="left:415.60px;top:551.28px;font-size:7.00px;color:#111;transform:scaleX(0.9068);transform-origin:0 0;">Ежедневно</div>
<svg class="a" style="left:478px;top:553px;" width="5" height="3" viewBox="0 0 5 3"><path d="M0 0 L5 0 L2.5 3Z" fill="#222"/></svg>
<div class="a" style="left:490px;top:550px;width:8px;height:8px;background:linear-gradient(135deg,#c8cce0,#f4f4fa);border:1px solid #8e8f8f"></div>
<svg class="a" style="left:491px;top:551px;" width="6" height="6" viewBox="0 0 6 6"><path d="M0.8 3 L2.4 5 L5.4 0.6" stroke="#4a5a7a" stroke-width="1" fill="none"/></svg>
<div class="t" style="left:499.10px;top:551.26px;font-size:6.78px;color:#111;transform:scaleX(0.9278);transform-origin:0 0;">Пн</div>
<div class="a" style="left:519px;top:550px;width:8px;height:8px;background:linear-gradient(135deg,#c8cce0,#f4f4fa);border:1px solid #8e8f8f"></div>
<svg class="a" style="left:520px;top:551px;" width="6" height="6" viewBox="0 0 6 6"><path d="M0.8 3 L2.4 5 L5.4 0.6" stroke="#4a5a7a" stroke-width="1" fill="none"/></svg>
<div class="t" style="left:528.10px;top:551.26px;font-size:6.78px;color:#111;transform:scaleX(1.0800);transform-origin:0 0;">Вт</div>
<div class="a" style="left:546px;top:550px;width:8px;height:8px;background:linear-gradient(135deg,#c8cce0,#f4f4fa);border:1px solid #8e8f8f"></div>
<svg class="a" style="left:547px;top:551px;" width="6" height="6" viewBox="0 0 6 6"><path d="M0.8 3 L2.4 5 L5.4 0.6" stroke="#4a5a7a" stroke-width="1" fill="none"/></svg>
<div class="t" style="left:555.10px;top:551.26px;font-size:6.78px;color:#111;transform:scaleX(0.9225);transform-origin:0 0;">Ср</div>
<div class="a" style="left:574px;top:550px;width:8px;height:8px;background:linear-gradient(135deg,#c8cce0,#f4f4fa);border:1px solid #8e8f8f"></div>
<svg class="a" style="left:575px;top:551px;" width="6" height="6" viewBox="0 0 6 6"><path d="M0.8 3 L2.4 5 L5.4 0.6" stroke="#4a5a7a" stroke-width="1" fill="none"/></svg>
<div class="t" style="left:583.10px;top:551.26px;font-size:6.78px;color:#111;transform:scaleX(1.0487);transform-origin:0 0;">Чт</div>
<div class="a" style="left:602px;top:550px;width:8px;height:8px;background:linear-gradient(135deg,#c8cce0,#f4f4fa);border:1px solid #8e8f8f"></div>
<svg class="a" style="left:603px;top:551px;" width="6" height="6" viewBox="0 0 6 6"><path d="M0.8 3 L2.4 5 L5.4 0.6" stroke="#4a5a7a" stroke-width="1" fill="none"/></svg>
<div class="t" style="left:611.10px;top:551.26px;font-size:6.78px;color:#111;transform:scaleX(1.0021);transform-origin:0 0;">Пт</div>
<div class="a" style="left:629px;top:550px;width:8px;height:8px;background:linear-gradient(135deg,#c8cce0,#f4f4fa);border:1px solid #8e8f8f"></div>
<svg class="a" style="left:630px;top:551px;" width="6" height="6" viewBox="0 0 6 6"><path d="M0.8 3 L2.4 5 L5.4 0.6" stroke="#4a5a7a" stroke-width="1" fill="none"/></svg>
<div class="t" style="left:638.10px;top:551.26px;font-size:6.78px;color:#111;transform:scaleX(0.9107);transform-origin:0 0;">Сб</div>
<div class="a" style="left:658px;top:550px;width:8px;height:8px;background:linear-gradient(135deg,#c8cce0,#f4f4fa);border:1px solid #8e8f8f"></div>
<svg class="a" style="left:659px;top:551px;" width="6" height="6" viewBox="0 0 6 6"><path d="M0.8 3 L2.4 5 L5.4 0.6" stroke="#4a5a7a" stroke-width="1" fill="none"/></svg>
<div class="t" style="left:667.10px;top:551.26px;font-size:6.78px;color:#111;transform:scaleX(1.0105);transform-origin:0 0;">Вс</div>
<div class="t" style="left:413.60px;top:561.90px;font-size:7.21px;color:#333;transform:scaleX(0.9223);transform-origin:0 0;">Время</div>
<div class="a" style="left:414px;top:571px;width:126px;height:12px;background:linear-gradient(#fbfbfb,#ececec 45%,#d6d6d6);border:1px solid #9a9a9a;border-radius:1px"></div>
<div class="t" style="left:415.60px;top:574.28px;font-size:7.00px;color:#111;transform:scaleX(0.8959);transform-origin:0 0;">Без ограничений</div>
<svg class="a" style="left:532px;top:576px;" width="5" height="3" viewBox="0 0 5 3"><path d="M0 0 L5 0 L2.5 3Z" fill="#222"/></svg>
<div class="t" style="left:543.60px;top:562.12px;font-size:6.36px;color:#d2d2d2;transform:scaleX(0.8573);transform-origin:0 0;">Начало</div>
<div class="t" style="left:585.60px;top:562.12px;font-size:6.36px;color:#d2d2d2;transform:scaleX(0.9479);transform-origin:0 0;">Конец</div>
<div class="a" style="left:543px;top:571px;width:39px;height:12px;background:#f4f4f4;border:1px solid #c8c8c8"></div>
<div class="t" style="left:545.60px;top:574.26px;font-size:6.78px;color:#a8a8a8;transform:scaleX(0.9425);transform-origin:0 0;">00:00</div>
<div class="a" style="left:572px;top:572px;width:9px;height:10px;background:#eeeeee;border-left:1px solid #d4d4d4"></div>
<div class="a" style="left:572px;top:577px;width:9px;height:1px;background:#d4d4d4"></div>
<svg class="a" style="left:574px;top:573px;" width="5" height="3" viewBox="0 0 5 3"><path d="M0 3 L2.5 0 L5 3Z" fill="#b8b8b8"/></svg>
<svg class="a" style="left:574px;top:579px;" width="5" height="3" viewBox="0 0 5 3"><path d="M0 0 L2.5 3 L5 0Z" fill="#b8b8b8"/></svg>
<div class="a" style="left:586px;top:571px;width:39px;height:12px;background:#f4f4f4;border:1px solid #c8c8c8"></div>
<div class="t" style="left:588.60px;top:574.26px;font-size:6.78px;color:#a8a8a8;transform:scaleX(0.9425);transform-origin:0 0;">23:59</div>
<div class="a" style="left:615px;top:572px;width:9px;height:10px;background:#eeeeee;border-left:1px solid #d4d4d4"></div>
<div class="a" style="left:615px;top:577px;width:9px;height:1px;background:#d4d4d4"></div>
<svg class="a" style="left:617px;top:573px;" width="5" height="3" viewBox="0 0 5 3"><path d="M0 3 L2.5 0 L5 3Z" fill="#b8b8b8"/></svg>
<svg class="a" style="left:617px;top:579px;" width="5" height="3" viewBox="0 0 5 3"><path d="M0 0 L2.5 3 L5 0Z" fill="#b8b8b8"/></svg>
<div class="a" style="left:410px;top:589px;width:696px;height:3px;background:linear-gradient(#fafafa 0,#fafafa 1px,#c0c0c0 1px,#c0c0c0 2px,#e6e6e6 2px)"></div>
</body></html>
